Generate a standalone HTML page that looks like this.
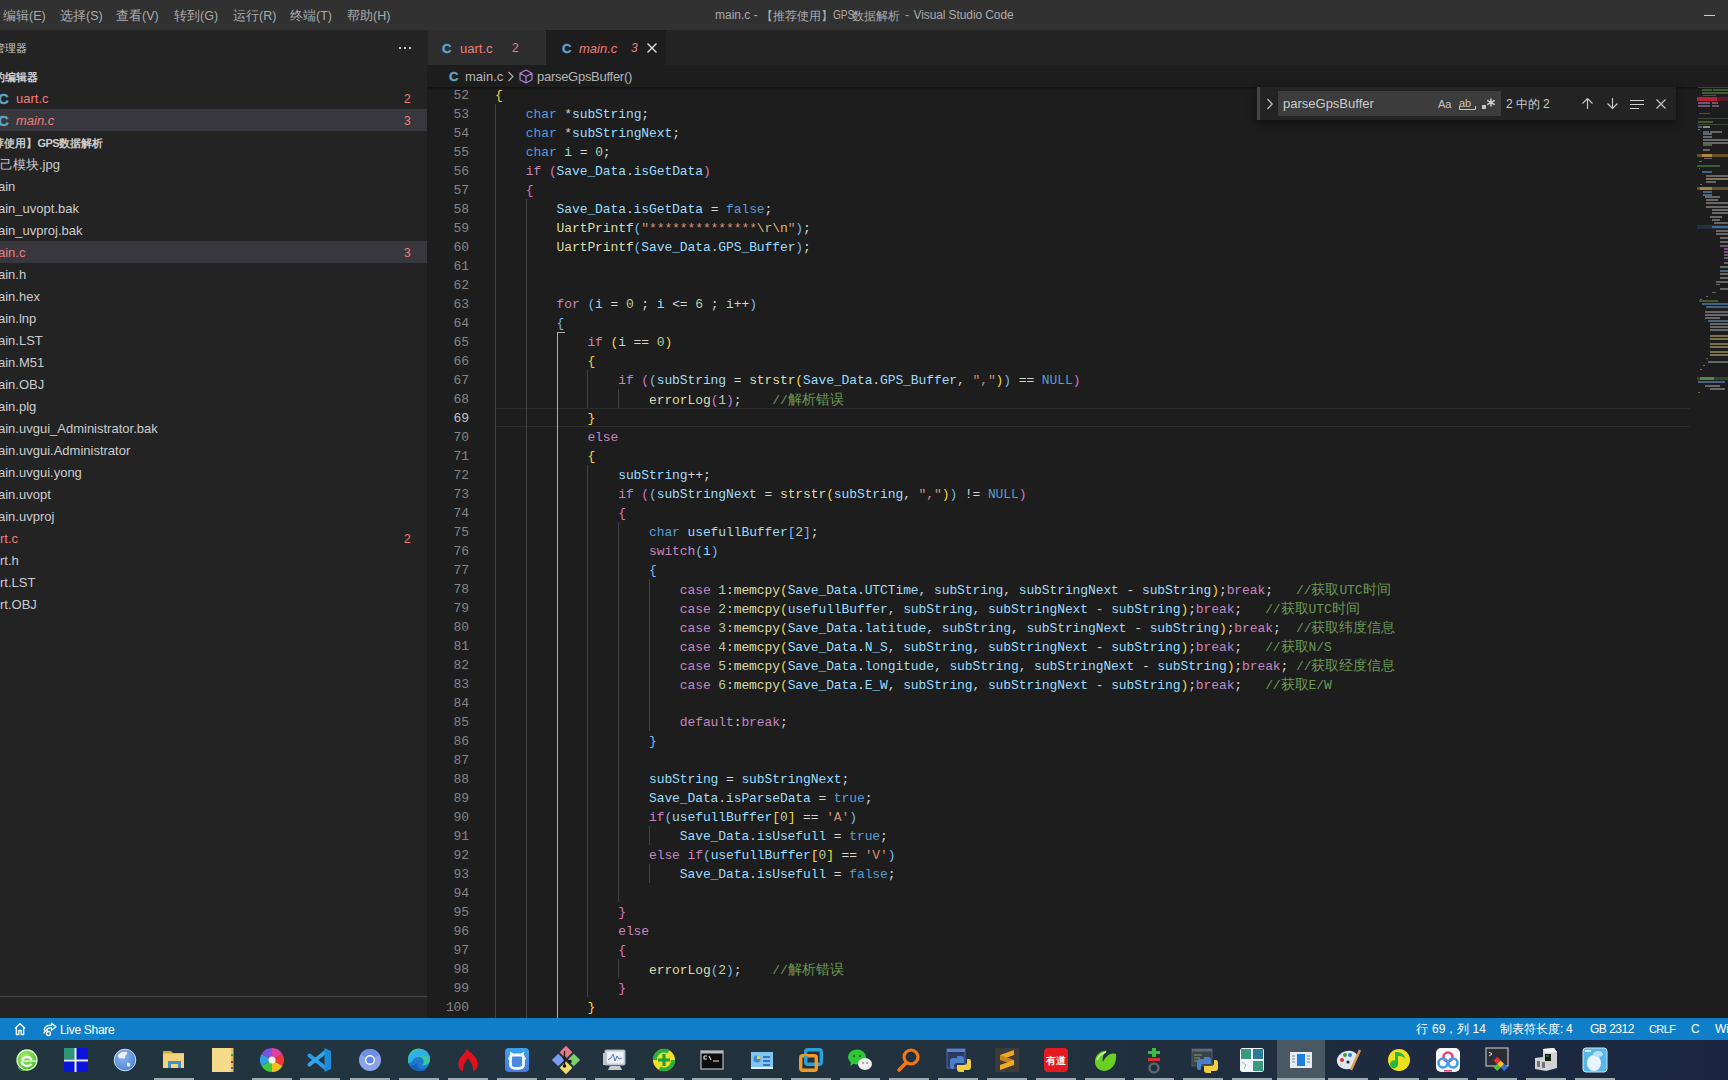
<!DOCTYPE html>
<html><head><meta charset="utf-8">
<style>
*{margin:0;padding:0;box-sizing:border-box}
html,body{width:1728px;height:1080px;overflow:hidden;background:#1d1d1d;font-family:"Liberation Sans",sans-serif;}
.abs{position:absolute}
#title{position:absolute;left:0;top:0;width:1728px;height:30px;background:#313131;color:#ababab;font-size:12.5px}
#title .m{position:absolute;top:8px;white-space:nowrap}
#title .tt{position:absolute;top:8px;left:715px;white-space:nowrap;color:#aaaaaa;font-size:12px}
#sidebar{position:absolute;left:0;top:30px;width:427px;height:988px;background:#232324;overflow:hidden;color:#cccccc;font-size:13px}
#sidebar .row{position:absolute;left:0;height:22px;line-height:24px;white-space:nowrap;width:427px}
#sidebar .badge{position:absolute;left:404px;height:22px;line-height:24px;color:#ee7e7c;font-size:12px}
#editor{position:absolute;left:427px;top:30px;width:1301px;height:988px;background:#1d1d1d;overflow:hidden}
#tabs{position:absolute;left:0;top:0;width:1301px;height:35px;background:#232323}
.tab{position:absolute;top:0;height:35px;font-size:13px;line-height:37px;white-space:nowrap}
.ci{color:#62a4c8;font-weight:bold;-webkit-text-stroke:0.4px #62a4c8}
#crumbs{position:absolute;left:0;top:35px;width:1301px;height:22px;background:#1d1d1d;font-size:13px;color:#b4b4b4;line-height:24px;white-space:nowrap}
#code{position:absolute;left:427px;top:87px;width:1301px;height:931px;overflow:hidden}
#codein{position:absolute;left:-427px;top:0;width:1728px;height:931px}
.ln{position:absolute;height:19px;line-height:19px;font-family:"Liberation Mono",monospace;font-size:13px;letter-spacing:-0.1px;white-space:pre;color:#d4d4d4}
.num{position:absolute;left:419px;width:50px;text-align:right;height:19px;line-height:19px;font-family:"Liberation Mono",monospace;font-size:13px;letter-spacing:-0.1px;color:#858585}
.num.cur{color:#c6c6c6}
.mm{position:absolute;opacity:0.68}
.g{position:absolute;width:1px;background:#404040}
.g.act{background:#a8b0b4}
.cj{font-family:"Liberation Sans",sans-serif;letter-spacing:0;font-size:14px}
#status{position:absolute;left:0;top:1018px;width:1728px;height:22px;background:#107fc9;color:#ffffff;font-size:12px;line-height:22px;white-space:nowrap}
#status .s{position:absolute;top:0}
#taskbar{position:absolute;left:0;top:1040px;width:1728px;height:40px;background:linear-gradient(90deg,#22353f 0%,#21313d 60%,#1b2541 100%)}
.ti{position:absolute;top:0;width:48px;height:40px}
.ind{position:absolute;top:38px;height:2px;background:#a4aeb4}
</style></head><body>

<div id="title">
  <div class="m" style="left:3px">编辑(E)</div>
  <div class="m" style="left:60px">选择(S)</div>
  <div class="m" style="left:116px">查看(V)</div>
  <div class="m" style="left:174px">转到(G)</div>
  <div class="m" style="left:233px">运行(R)</div>
  <div class="m" style="left:290px">终端(T)</div>
  <div class="m" style="left:347px">帮助(H)</div>
  <div class="tt" style="left:715px">main.c -</div><div class="tt" style="left:761px;font-size:12.4px">【推荐使用】</div><div class="tt" style="left:832.5px;transform:scaleX(0.84);transform-origin:0 0">GPS</div><div class="tt" style="left:852px;font-size:12.4px">数据解析</div><div class="tt" style="left:905px">-</div><div class="tt" style="left:913.5px;letter-spacing:-0.1px">Visual Studio Code</div>
  <div class="abs" style="left:1704px;top:15px;width:11px;height:1px;background:#cccccc"></div>
</div>

<div id="sidebar">
  <div class="row" style="top:7px;left:-6px;height:22px;line-height:22px;font-size:11px">管理器</div>
  <div class="abs" style="left:399px;top:17px;width:14px;height:3px;color:#ccc;font-size:14px;line-height:3px">
    <div class="abs" style="left:0;top:0;width:2px;height:2px;background:#ccc"></div>
    <div class="abs" style="left:5px;top:0;width:2px;height:2px;background:#ccc"></div>
    <div class="abs" style="left:10px;top:0;width:2px;height:2px;background:#ccc"></div>
  </div>
  <div class="row" style="top:35px;left:-6px;font-size:11px;font-weight:bold">的编辑器</div>
  <div class="row" style="top:57px;color:#ee7e7c"><span style="position:absolute;left:-2px;font-size:15px;color:#62a4c8;font-weight:bold;-webkit-text-stroke:0.3px #62a4c8">C</span><span style="position:absolute;left:16px">uart.c</span></div>
  <div class="badge" style="top:57px">2</div>
  <div class="row" style="top:79px;background:#37373d;color:#ee7e7c"><span style="position:absolute;left:-2px;font-size:15px;color:#62a4c8;font-weight:bold;-webkit-text-stroke:0.3px #62a4c8">C</span><span style="position:absolute;left:16px;font-style:italic">main.c</span></div>
  <div class="badge" style="top:79px">3</div>
  <div class="row" style="top:101px;left:-7px;font-size:11px;font-weight:bold">荐使用】</div><div class="row" style="top:101px;left:37.5px;font-size:11px;font-weight:bold;letter-spacing:-0.6px">GPS</div><div class="row" style="top:101px;left:59px;font-size:11px;font-weight:bold">数据解析</div>
  <div class="row" style="top:211px;background:#37373d"></div>
  <div class="row" style="top:123px;left:0px;color:#cccccc">己模块</div>
<div class="row" style="top:123px;left:39px;color:#cccccc">.jpg</div>
<div class="row" style="top:145px;left:-2px;color:#cccccc">ain</div>
<div class="row" style="top:167px;left:-2px;color:#cccccc">ain_uvopt.bak</div>
<div class="row" style="top:189px;left:-2px;color:#cccccc">ain_uvproj.bak</div>
<div class="row" style="top:211px;left:-2px;color:#ee7e7c">ain.c</div>
<div class="badge" style="top:211px">3</div>
<div class="row" style="top:233px;left:-2px;color:#cccccc">ain.h</div>
<div class="row" style="top:255px;left:-2px;color:#cccccc">ain.hex</div>
<div class="row" style="top:277px;left:-2px;color:#cccccc">ain.lnp</div>
<div class="row" style="top:299px;left:-2px;color:#cccccc">ain.LST</div>
<div class="row" style="top:321px;left:-2px;color:#cccccc">ain.M51</div>
<div class="row" style="top:343px;left:-2px;color:#cccccc">ain.OBJ</div>
<div class="row" style="top:365px;left:-2px;color:#cccccc">ain.plg</div>
<div class="row" style="top:387px;left:-2px;color:#cccccc">ain.uvgui_Administrator.bak</div>
<div class="row" style="top:409px;left:-2px;color:#cccccc">ain.uvgui.Administrator</div>
<div class="row" style="top:431px;left:-2px;color:#cccccc">ain.uvgui.yong</div>
<div class="row" style="top:453px;left:-2px;color:#cccccc">ain.uvopt</div>
<div class="row" style="top:475px;left:-2px;color:#cccccc">ain.uvproj</div>
<div class="row" style="top:497px;left:0px;color:#ee7e7c">rt.c</div>
<div class="badge" style="top:497px">2</div>
<div class="row" style="top:519px;left:0px;color:#cccccc">rt.h</div>
<div class="row" style="top:541px;left:0px;color:#cccccc">rt.LST</div>
<div class="row" style="top:563px;left:0px;color:#cccccc">rt.OBJ</div>
  <div class="abs" style="left:0;top:966px;width:427px;height:1px;background:#464647"></div>
</div>

<div id="editor">
  <div id="tabs">
    <div class="tab" style="left:1px;width:118px;background:#2d2d2d">
      <span class="abs ci" style="left:14px">C</span>
      <span class="abs" style="left:32px;color:#ee7e7c">uart.c</span>
      <span class="abs" style="left:84px;color:#ee7e7c;font-size:12px">2</span>
    </div>
    <div class="tab" style="left:119px;width:120px;background:#1d1d1d">
      <span class="abs ci" style="left:16px">C</span>
      <span class="abs" style="left:33px;color:#ee7e7c;font-style:italic">main.c</span>
      <span class="abs" style="left:85px;color:#ee7e7c;font-size:12px;font-style:italic">3</span>
      <svg class="abs" style="left:100px;top:12px" width="12" height="12" viewBox="0 0 12 12"><path d="M1.5 1.5L10.5 10.5M10.5 1.5L1.5 10.5" stroke="#e8e8e8" stroke-width="1.3"/></svg>
    </div>
  </div>
  <div id="crumbs">
    <span class="abs ci" style="left:22px">C</span>
    <span class="abs" style="left:38px">main.c</span>
    <svg class="abs" style="left:80px;top:6px" width="8" height="11" viewBox="0 0 8 11"><path d="M1.5 1L6 5.5L1.5 10" fill="none" stroke="#b4b4b4" stroke-width="1.1"/></svg>
    <svg class="abs" style="left:92px;top:4px" width="14" height="15" viewBox="0 0 14 15"><path d="M7 1L13 4.2V10.8L7 14L1 10.8V4.2Z M1 4.2L7 7.5L13 4.2 M7 7.5V14" fill="none" stroke="#b180d7" stroke-width="1.2" stroke-linejoin="round"/></svg>
    <span class="abs" style="left:110px;letter-spacing:-0.28px">parseGpsBuffer()</span>
  </div>
</div>

<div id="code"><div id="codein">
  <div class="abs" style="left:495px;top:321px;width:1195px;height:19px;border-top:1px solid #2b2b2b;border-bottom:1px solid #2b2b2b"></div>
  <div class="g" style="left:495px;top:17px;height:931px"></div>
<div class="g" style="left:526px;top:112px;height:836px"></div>
<div class="g act" style="left:557px;top:245px;height:703px"></div>
<div class="g" style="left:587px;top:283px;height:38px"></div>
<div class="g" style="left:587px;top:378px;height:532px"></div>
<div class="g" style="left:618px;top:302px;height:19px"></div>
<div class="g" style="left:618px;top:435px;height:380px"></div>
<div class="g" style="left:618px;top:872px;height:19px"></div>
<div class="g" style="left:649px;top:492px;height:152px"></div>
<div class="g" style="left:649px;top:739px;height:19px"></div>
<div class="g" style="left:649px;top:777px;height:19px"></div>
<div class="ln" style="top:-1px;left:495.0px"><span style="color:#f5d540">{</span></div>
<div class="num" style="top:-1px">52</div>
<div class="ln" style="top:18px;left:525.8px"><span style="color:#569cd6">char</span> <span style="color:#d4d4d4">*</span><span style="color:#9cdcfe">subString</span><span style="color:#d4d4d4">;</span></div>
<div class="num" style="top:18px">53</div>
<div class="ln" style="top:37px;left:525.8px"><span style="color:#569cd6">char</span> <span style="color:#d4d4d4">*</span><span style="color:#9cdcfe">subStringNext</span><span style="color:#d4d4d4">;</span></div>
<div class="num" style="top:37px">54</div>
<div class="ln" style="top:56px;left:525.8px"><span style="color:#569cd6">char</span> <span style="color:#9cdcfe">i</span> <span style="color:#d4d4d4">=</span> <span style="color:#b5cea8">0</span><span style="color:#d4d4d4">;</span></div>
<div class="num" style="top:56px">55</div>
<div class="ln" style="top:75px;left:525.8px"><span style="color:#c586c0">if</span> <span style="color:#d474d0">(</span><span style="color:#9cdcfe">Save_Data</span><span style="color:#d4d4d4">.</span><span style="color:#9cdcfe">isGetData</span><span style="color:#d474d0">)</span></div>
<div class="num" style="top:75px">56</div>
<div class="ln" style="top:94px;left:525.8px"><span style="color:#d474d0">{</span></div>
<div class="num" style="top:94px">57</div>
<div class="ln" style="top:113px;left:556.6px"><span style="color:#9cdcfe">Save_Data</span><span style="color:#d4d4d4">.</span><span style="color:#9cdcfe">isGetData</span> <span style="color:#d4d4d4">=</span> <span style="color:#569cd6">false</span><span style="color:#d4d4d4">;</span></div>
<div class="num" style="top:113px">58</div>
<div class="ln" style="top:132px;left:556.6px"><span style="color:#dcdcaa">UartPrintf</span><span style="color:#78b8f0">(</span><span style="color:#ce9178">&quot;**************</span><span style="color:#d7ba7d">\r\n</span><span style="color:#ce9178">&quot;</span><span style="color:#78b8f0">)</span><span style="color:#d4d4d4">;</span></div>
<div class="num" style="top:132px">59</div>
<div class="ln" style="top:151px;left:556.6px"><span style="color:#dcdcaa">UartPrintf</span><span style="color:#78b8f0">(</span><span style="color:#9cdcfe">Save_Data</span><span style="color:#d4d4d4">.</span><span style="color:#9cdcfe">GPS_Buffer</span><span style="color:#78b8f0">)</span><span style="color:#d4d4d4">;</span></div>
<div class="num" style="top:151px">60</div>
<div class="ln" style="top:170px;left:495.0px"></div>
<div class="num" style="top:170px">61</div>
<div class="ln" style="top:189px;left:495.0px"></div>
<div class="num" style="top:189px">62</div>
<div class="ln" style="top:208px;left:556.6px"><span style="color:#c586c0">for</span> <span style="color:#78b8f0">(</span><span style="color:#9cdcfe">i</span> <span style="color:#d4d4d4">=</span> <span style="color:#b5cea8">0</span> <span style="color:#d4d4d4">;</span> <span style="color:#9cdcfe">i</span> <span style="color:#d4d4d4">&lt;=</span> <span style="color:#b5cea8">6</span> <span style="color:#d4d4d4">;</span> <span style="color:#9cdcfe">i</span><span style="color:#d4d4d4">++</span><span style="color:#78b8f0">)</span></div>
<div class="num" style="top:208px">63</div>
<div class="ln" style="top:227px;left:556.6px"><span style="color:#78b8f0">{</span></div>
<div class="num" style="top:227px">64</div>
<div class="ln" style="top:246px;left:587.4px"><span style="color:#c586c0">if</span> <span style="color:#f5d540">(</span><span style="color:#9cdcfe">i</span> <span style="color:#d4d4d4">==</span> <span style="color:#b5cea8">0</span><span style="color:#f5d540">)</span></div>
<div class="num" style="top:246px">65</div>
<div class="ln" style="top:265px;left:587.4px"><span style="color:#f5d540">{</span></div>
<div class="num" style="top:265px">66</div>
<div class="ln" style="top:284px;left:618.2px"><span style="color:#c586c0">if</span> <span style="color:#d474d0">(</span><span style="color:#78b8f0">(</span><span style="color:#9cdcfe">subString</span> <span style="color:#d4d4d4">=</span> <span style="color:#dcdcaa">strstr</span><span style="color:#f5d540">(</span><span style="color:#9cdcfe">Save_Data</span><span style="color:#d4d4d4">.</span><span style="color:#9cdcfe">GPS_Buffer</span><span style="color:#d4d4d4">,</span> <span style="color:#ce9178">&quot;,&quot;</span><span style="color:#f5d540">)</span><span style="color:#78b8f0">)</span> <span style="color:#d4d4d4">==</span> <span style="color:#569cd6">NULL</span><span style="color:#d474d0">)</span></div>
<div class="num" style="top:284px">67</div>
<div class="ln" style="top:303px;left:649.0px"><span style="color:#dcdcaa">errorLog</span><span style="color:#d474d0">(</span><span style="color:#b5cea8">1</span><span style="color:#d474d0">)</span><span style="color:#d4d4d4">;</span>    <span style="color:#6a9955">//<span class="cj">解析错误</span></span></div>
<div class="num" style="top:303px">68</div>
<div class="ln" style="top:322px;left:587.4px"><span style="color:#f5d540">}</span></div>
<div class="num cur" style="top:322px">69</div>
<div class="ln" style="top:341px;left:587.4px"><span style="color:#c586c0">else</span></div>
<div class="num" style="top:341px">70</div>
<div class="ln" style="top:360px;left:587.4px"><span style="color:#f5d540">{</span></div>
<div class="num" style="top:360px">71</div>
<div class="ln" style="top:379px;left:618.2px"><span style="color:#9cdcfe">subString</span><span style="color:#d4d4d4">++;</span></div>
<div class="num" style="top:379px">72</div>
<div class="ln" style="top:398px;left:618.2px"><span style="color:#c586c0">if</span> <span style="color:#d474d0">(</span><span style="color:#78b8f0">(</span><span style="color:#9cdcfe">subStringNext</span> <span style="color:#d4d4d4">=</span> <span style="color:#dcdcaa">strstr</span><span style="color:#f5d540">(</span><span style="color:#9cdcfe">subString</span><span style="color:#d4d4d4">,</span> <span style="color:#ce9178">&quot;,&quot;</span><span style="color:#f5d540">)</span><span style="color:#78b8f0">)</span> <span style="color:#d4d4d4">!=</span> <span style="color:#569cd6">NULL</span><span style="color:#d474d0">)</span></div>
<div class="num" style="top:398px">73</div>
<div class="ln" style="top:417px;left:618.2px"><span style="color:#d474d0">{</span></div>
<div class="num" style="top:417px">74</div>
<div class="ln" style="top:436px;left:649.0px"><span style="color:#569cd6">char</span> <span style="color:#9cdcfe">usefullBuffer</span><span style="color:#78b8f0">[</span><span style="color:#b5cea8">2</span><span style="color:#78b8f0">]</span><span style="color:#d4d4d4">;</span></div>
<div class="num" style="top:436px">75</div>
<div class="ln" style="top:455px;left:649.0px"><span style="color:#c586c0">switch</span><span style="color:#78b8f0">(</span><span style="color:#9cdcfe">i</span><span style="color:#78b8f0">)</span></div>
<div class="num" style="top:455px">76</div>
<div class="ln" style="top:474px;left:649.0px"><span style="color:#78b8f0">{</span></div>
<div class="num" style="top:474px">77</div>
<div class="ln" style="top:493px;left:679.8px"><span style="color:#c586c0">case</span> <span style="color:#b5cea8">1</span><span style="color:#d4d4d4">:</span><span style="color:#dcdcaa">memcpy</span><span style="color:#f5d540">(</span><span style="color:#9cdcfe">Save_Data</span><span style="color:#d4d4d4">.</span><span style="color:#9cdcfe">UTCTime</span><span style="color:#d4d4d4">,</span> <span style="color:#9cdcfe">subString</span><span style="color:#d4d4d4">,</span> <span style="color:#9cdcfe">subStringNext</span> <span style="color:#d4d4d4">-</span> <span style="color:#9cdcfe">subString</span><span style="color:#f5d540">)</span><span style="color:#d4d4d4">;</span><span style="color:#c586c0">break</span><span style="color:#d4d4d4">;</span>   <span style="color:#6a9955">//<span class="cj">获取</span>UTC<span class="cj">时间</span></span></div>
<div class="num" style="top:493px">78</div>
<div class="ln" style="top:512px;left:679.8px"><span style="color:#c586c0">case</span> <span style="color:#b5cea8">2</span><span style="color:#d4d4d4">:</span><span style="color:#dcdcaa">memcpy</span><span style="color:#f5d540">(</span><span style="color:#9cdcfe">usefullBuffer</span><span style="color:#d4d4d4">,</span> <span style="color:#9cdcfe">subString</span><span style="color:#d4d4d4">,</span> <span style="color:#9cdcfe">subStringNext</span> <span style="color:#d4d4d4">-</span> <span style="color:#9cdcfe">subString</span><span style="color:#f5d540">)</span><span style="color:#d4d4d4">;</span><span style="color:#c586c0">break</span><span style="color:#d4d4d4">;</span>   <span style="color:#6a9955">//<span class="cj">获取</span>UTC<span class="cj">时间</span></span></div>
<div class="num" style="top:512px">79</div>
<div class="ln" style="top:531px;left:679.8px"><span style="color:#c586c0">case</span> <span style="color:#b5cea8">3</span><span style="color:#d4d4d4">:</span><span style="color:#dcdcaa">memcpy</span><span style="color:#f5d540">(</span><span style="color:#9cdcfe">Save_Data</span><span style="color:#d4d4d4">.</span><span style="color:#9cdcfe">latitude</span><span style="color:#d4d4d4">,</span> <span style="color:#9cdcfe">subString</span><span style="color:#d4d4d4">,</span> <span style="color:#9cdcfe">subStringNext</span> <span style="color:#d4d4d4">-</span> <span style="color:#9cdcfe">subString</span><span style="color:#f5d540">)</span><span style="color:#d4d4d4">;</span><span style="color:#c586c0">break</span><span style="color:#d4d4d4">;</span>  <span style="color:#6a9955">//<span class="cj">获取纬度信息</span></span></div>
<div class="num" style="top:531px">80</div>
<div class="ln" style="top:550px;left:679.8px"><span style="color:#c586c0">case</span> <span style="color:#b5cea8">4</span><span style="color:#d4d4d4">:</span><span style="color:#dcdcaa">memcpy</span><span style="color:#f5d540">(</span><span style="color:#9cdcfe">Save_Data</span><span style="color:#d4d4d4">.</span><span style="color:#9cdcfe">N_S</span><span style="color:#d4d4d4">,</span> <span style="color:#9cdcfe">subString</span><span style="color:#d4d4d4">,</span> <span style="color:#9cdcfe">subStringNext</span> <span style="color:#d4d4d4">-</span> <span style="color:#9cdcfe">subString</span><span style="color:#f5d540">)</span><span style="color:#d4d4d4">;</span><span style="color:#c586c0">break</span><span style="color:#d4d4d4">;</span>   <span style="color:#6a9955">//<span class="cj">获取</span>N/S</span></div>
<div class="num" style="top:550px">81</div>
<div class="ln" style="top:569px;left:679.8px"><span style="color:#c586c0">case</span> <span style="color:#b5cea8">5</span><span style="color:#d4d4d4">:</span><span style="color:#dcdcaa">memcpy</span><span style="color:#f5d540">(</span><span style="color:#9cdcfe">Save_Data</span><span style="color:#d4d4d4">.</span><span style="color:#9cdcfe">longitude</span><span style="color:#d4d4d4">,</span> <span style="color:#9cdcfe">subString</span><span style="color:#d4d4d4">,</span> <span style="color:#9cdcfe">subStringNext</span> <span style="color:#d4d4d4">-</span> <span style="color:#9cdcfe">subString</span><span style="color:#f5d540">)</span><span style="color:#d4d4d4">;</span><span style="color:#c586c0">break</span><span style="color:#d4d4d4">;</span> <span style="color:#6a9955">//<span class="cj">获取经度信息</span></span></div>
<div class="num" style="top:569px">82</div>
<div class="ln" style="top:588px;left:679.8px"><span style="color:#c586c0">case</span> <span style="color:#b5cea8">6</span><span style="color:#d4d4d4">:</span><span style="color:#dcdcaa">memcpy</span><span style="color:#f5d540">(</span><span style="color:#9cdcfe">Save_Data</span><span style="color:#d4d4d4">.</span><span style="color:#9cdcfe">E_W</span><span style="color:#d4d4d4">,</span> <span style="color:#9cdcfe">subString</span><span style="color:#d4d4d4">,</span> <span style="color:#9cdcfe">subStringNext</span> <span style="color:#d4d4d4">-</span> <span style="color:#9cdcfe">subString</span><span style="color:#f5d540">)</span><span style="color:#d4d4d4">;</span><span style="color:#c586c0">break</span><span style="color:#d4d4d4">;</span>   <span style="color:#6a9955">//<span class="cj">获取</span>E/W</span></div>
<div class="num" style="top:588px">83</div>
<div class="ln" style="top:607px;left:495.0px"></div>
<div class="num" style="top:607px">84</div>
<div class="ln" style="top:626px;left:679.8px"><span style="color:#c586c0">default</span><span style="color:#d4d4d4">:</span><span style="color:#c586c0">break</span><span style="color:#d4d4d4">;</span></div>
<div class="num" style="top:626px">85</div>
<div class="ln" style="top:645px;left:649.0px"><span style="color:#78b8f0">}</span></div>
<div class="num" style="top:645px">86</div>
<div class="ln" style="top:664px;left:495.0px"></div>
<div class="num" style="top:664px">87</div>
<div class="ln" style="top:683px;left:649.0px"><span style="color:#9cdcfe">subString</span> <span style="color:#d4d4d4">=</span> <span style="color:#9cdcfe">subStringNext</span><span style="color:#d4d4d4">;</span></div>
<div class="num" style="top:683px">88</div>
<div class="ln" style="top:702px;left:649.0px"><span style="color:#9cdcfe">Save_Data</span><span style="color:#d4d4d4">.</span><span style="color:#9cdcfe">isParseData</span> <span style="color:#d4d4d4">=</span> <span style="color:#569cd6">true</span><span style="color:#d4d4d4">;</span></div>
<div class="num" style="top:702px">89</div>
<div class="ln" style="top:721px;left:649.0px"><span style="color:#c586c0">if</span><span style="color:#78b8f0">(</span><span style="color:#9cdcfe">usefullBuffer</span><span style="color:#f5d540">[</span><span style="color:#b5cea8">0</span><span style="color:#f5d540">]</span> <span style="color:#d4d4d4">==</span> <span style="color:#ce9178">&#x27;A&#x27;</span><span style="color:#78b8f0">)</span></div>
<div class="num" style="top:721px">90</div>
<div class="ln" style="top:740px;left:679.8px"><span style="color:#9cdcfe">Save_Data</span><span style="color:#d4d4d4">.</span><span style="color:#9cdcfe">isUsefull</span> <span style="color:#d4d4d4">=</span> <span style="color:#569cd6">true</span><span style="color:#d4d4d4">;</span></div>
<div class="num" style="top:740px">91</div>
<div class="ln" style="top:759px;left:649.0px"><span style="color:#c586c0">else</span> <span style="color:#c586c0">if</span><span style="color:#78b8f0">(</span><span style="color:#9cdcfe">usefullBuffer</span><span style="color:#f5d540">[</span><span style="color:#b5cea8">0</span><span style="color:#f5d540">]</span> <span style="color:#d4d4d4">==</span> <span style="color:#ce9178">&#x27;V&#x27;</span><span style="color:#78b8f0">)</span></div>
<div class="num" style="top:759px">92</div>
<div class="ln" style="top:778px;left:679.8px"><span style="color:#9cdcfe">Save_Data</span><span style="color:#d4d4d4">.</span><span style="color:#9cdcfe">isUsefull</span> <span style="color:#d4d4d4">=</span> <span style="color:#569cd6">false</span><span style="color:#d4d4d4">;</span></div>
<div class="num" style="top:778px">93</div>
<div class="ln" style="top:797px;left:495.0px"></div>
<div class="num" style="top:797px">94</div>
<div class="ln" style="top:816px;left:618.2px"><span style="color:#d474d0">}</span></div>
<div class="num" style="top:816px">95</div>
<div class="ln" style="top:835px;left:618.2px"><span style="color:#c586c0">else</span></div>
<div class="num" style="top:835px">96</div>
<div class="ln" style="top:854px;left:618.2px"><span style="color:#d474d0">{</span></div>
<div class="num" style="top:854px">97</div>
<div class="ln" style="top:873px;left:649.0px"><span style="color:#dcdcaa">errorLog</span><span style="color:#78b8f0">(</span><span style="color:#b5cea8">2</span><span style="color:#78b8f0">)</span><span style="color:#d4d4d4">;</span>    <span style="color:#6a9955">//<span class="cj">解析错误</span></span></div>
<div class="num" style="top:873px">98</div>
<div class="ln" style="top:892px;left:618.2px"><span style="color:#d474d0">}</span></div>
<div class="num" style="top:892px">99</div>
<div class="ln" style="top:911px;left:587.4px"><span style="color:#f5d540">}</span></div>
<div class="num" style="top:911px">100</div>
<div class="abs" style="left:557px;top:245px;width:8px;height:1px;background:#a8b0b4"></div>
</div></div>
<div class="abs" style="left:427px;top:87px;width:1301px;height:3px;background:linear-gradient(rgba(0,0,0,0.4),rgba(0,0,0,0))"></div>


<div class="mm" style="left:1698px;top:87px;width:30px;height:1px;background:#505c48"></div>
<div class="mm" style="left:1702px;top:89px;width:10px;height:2px;background:#4e7a40"></div>
<div class="mm" style="left:1713px;top:89px;width:15px;height:2px;background:#4e7a40"></div>
<div class="mm" style="left:1702px;top:92px;width:26px;height:2px;background:#4e7a40"></div>
<div class="mm" style="left:1703px;top:95px;width:13px;height:1px;background:#4e7a40"></div>
<div class="mm" style="left:1697px;top:97px;width:20px;height:4px;background:#ff2040"></div>
<div class="mm" style="left:1717px;top:97px;width:11px;height:4px;background:#7a1828"></div>
<div class="mm" style="left:1698px;top:102px;width:12px;height:2px;background:#9a70a0"></div>
<div class="mm" style="left:1712px;top:102px;width:6px;height:2px;background:#a07080"></div>
<div class="mm" style="left:1698px;top:105px;width:12px;height:2px;background:#9a70a0"></div>
<div class="mm" style="left:1712px;top:105px;width:7px;height:2px;background:#a07080"></div>
<div class="mm" style="left:1699px;top:113px;width:11px;height:1px;background:#4e7a40"></div>
<div class="mm" style="left:1698px;top:118px;width:30px;height:1px;background:#505c48"></div>
<div class="mm" style="left:1698px;top:121px;width:15px;height:2px;background:#4e7a40"></div>
<div class="mm" style="left:1698px;top:124px;width:30px;height:1px;background:#505c48"></div>
<div class="mm" style="left:1698px;top:126px;width:4px;height:2px;background:#5a86b0"></div>
<div class="mm" style="left:1703px;top:126px;width:7px;height:2px;background:#c0c0a0"></div>
<div class="mm" style="left:1698px;top:129px;width:2px;height:1px;background:#a09a70"></div>
<div class="mm" style="left:1703px;top:131px;width:6px;height:2px;background:#5a86b0"></div>
<div class="mm" style="left:1710px;top:131px;width:12px;height:2px;background:#8a8a8a"></div>
<div class="mm" style="left:1703px;top:133px;width:9px;height:2px;background:#8a8a8a"></div>
<div class="mm" style="left:1703px;top:136px;width:9px;height:2px;background:#8a8a8a"></div>
<div class="mm" style="left:1703px;top:139px;width:25px;height:2px;background:#8a8a8a"></div>
<div class="mm" style="left:1703px;top:142px;width:25px;height:2px;background:#8a8a8a"></div>
<div class="mm" style="left:1703px;top:144px;width:9px;height:2px;background:#708060"></div>
<div class="mm" style="left:1703px;top:149px;width:7px;height:2px;background:#8a8a8a"></div>
<div class="mm" style="left:1697px;top:154px;width:31px;height:3px;background:#8a6a30"></div>
<div class="mm" style="left:1702px;top:154px;width:10px;height:3px;background:#d0a040"></div>
<div class="mm" style="left:1704px;top:158px;width:8px;height:1px;background:#8a8a8a"></div>
<div class="mm" style="left:1699px;top:161px;width:3px;height:1px;background:#8a8a8a"></div>
<div class="mm" style="left:1697px;top:165px;width:23px;height:2px;background:#4e7a40"></div>
<div class="mm" style="left:1699px;top:168px;width:1px;height:1px;background:#8a8a8a"></div>
<div class="mm" style="left:1702px;top:171px;width:10px;height:2px;background:#5a86b0"></div>
<div class="mm" style="left:1706px;top:175px;width:22px;height:2px;background:#8a8a8a"></div>
<div class="mm" style="left:1706px;top:178px;width:22px;height:2px;background:#b0a070"></div>
<div class="mm" style="left:1706px;top:181px;width:10px;height:2px;background:#8a8a8a"></div>
<div class="mm" style="left:1700px;top:184px;width:2px;height:1px;background:#8a8a8a"></div>
<div class="mm" style="left:1697px;top:187px;width:31px;height:3px;background:#8a6a30"></div>
<div class="mm" style="left:1700px;top:187px;width:12px;height:3px;background:#c09a50"></div>
<div class="mm" style="left:1703px;top:191px;width:9px;height:2px;background:#6a8ab0"></div>
<div class="mm" style="left:1703px;top:194px;width:9px;height:2px;background:#6a8ab0"></div>
<div class="mm" style="left:1705px;top:196px;width:15px;height:2px;background:#8a8a8a"></div>
<div class="mm" style="left:1706px;top:199px;width:12px;height:2px;background:#8a8a8a"></div>
<div class="mm" style="left:1706px;top:202px;width:22px;height:2px;background:#8a8a8a"></div>
<div class="mm" style="left:1706px;top:206px;width:22px;height:2px;background:#8a8a8a"></div>
<div class="mm" style="left:1712px;top:209px;width:16px;height:2px;background:#909090"></div>
<div class="mm" style="left:1712px;top:212px;width:16px;height:2px;background:#909090"></div>
<div class="mm" style="left:1710px;top:216px;width:12px;height:2px;background:#8a8a8a"></div>
<div class="mm" style="left:1712px;top:219px;width:8px;height:2px;background:#8a8a8a"></div>
<div class="mm" style="left:1714px;top:222px;width:14px;height:2px;background:#8a8a8a"></div>
<div class="mm" style="left:1697px;top:225px;width:31px;height:4px;background:#2a3a50"></div>
<div class="mm" style="left:1712px;top:226px;width:16px;height:2px;background:#5a86b0"></div>
<div class="mm" style="left:1716px;top:230px;width:12px;height:2px;background:#8a8a8a"></div>
<div class="mm" style="left:1716px;top:233px;width:12px;height:2px;background:#8a8a8a"></div>
<div class="mm" style="left:1720px;top:237px;width:8px;height:2px;background:#8a8a8a"></div>
<div class="mm" style="left:1720px;top:241px;width:8px;height:2px;background:#8a8a8a"></div>
<div class="mm" style="left:1720px;top:245px;width:8px;height:2px;background:#9a70a0"></div>
<div class="mm" style="left:1724px;top:248px;width:4px;height:2px;background:#9a70a0"></div>
<div class="mm" style="left:1724px;top:251px;width:4px;height:2px;background:#9a70a0"></div>
<div class="mm" style="left:1724px;top:254px;width:4px;height:2px;background:#9a70a0"></div>
<div class="mm" style="left:1724px;top:257px;width:4px;height:2px;background:#9a70a0"></div>
<div class="mm" style="left:1724px;top:262px;width:4px;height:2px;background:#8a8a8a"></div>
<div class="mm" style="left:1720px;top:266px;width:8px;height:2px;background:#8a8a8a"></div>
<div class="mm" style="left:1720px;top:270px;width:8px;height:2px;background:#5a86b0"></div>
<div class="mm" style="left:1720px;top:273px;width:8px;height:2px;background:#8a8a8a"></div>
<div class="mm" style="left:1720px;top:277px;width:8px;height:2px;background:#8a8a8a"></div>
<div class="mm" style="left:1716px;top:281px;width:12px;height:2px;background:#8a8a8a"></div>
<div class="mm" style="left:1716px;top:284px;width:4px;height:1px;background:#8a8a8a"></div>
<div class="mm" style="left:1720px;top:288px;width:8px;height:2px;background:#8a8a8a"></div>
<div class="mm" style="left:1712px;top:292px;width:4px;height:1px;background:#8a8a8a"></div>
<div class="mm" style="left:1706px;top:296px;width:2px;height:1px;background:#8a8a8a"></div>
<div class="mm" style="left:1700px;top:299px;width:2px;height:1px;background:#8a8a8a"></div>
<div class="mm" style="left:1699px;top:300px;width:19px;height:2px;background:#4e7a40"></div>
<div class="mm" style="left:1702px;top:303px;width:26px;height:2px;background:#5a86b0"></div>
<div class="mm" style="left:1706px;top:306px;width:22px;height:2px;background:#5a86b0"></div>
<div class="mm" style="left:1705px;top:311px;width:23px;height:2px;background:#8a8a8a"></div>
<div class="mm" style="left:1705px;top:314px;width:23px;height:2px;background:#8a8a8a"></div>
<div class="mm" style="left:1705px;top:317px;width:15px;height:2px;background:#8a8a8a"></div>
<div class="mm" style="left:1708px;top:320px;width:20px;height:2px;background:#5a86b0"></div>
<div class="mm" style="left:1710px;top:323px;width:18px;height:2px;background:#8a8a8a"></div>
<div class="mm" style="left:1710px;top:326px;width:18px;height:2px;background:#8a8a8a"></div>
<div class="mm" style="left:1710px;top:329px;width:18px;height:2px;background:#8a8a8a"></div>
<div class="mm" style="left:1710px;top:335px;width:18px;height:2px;background:#a09a70"></div>
<div class="mm" style="left:1710px;top:338px;width:18px;height:2px;background:#a09a70"></div>
<div class="mm" style="left:1710px;top:343px;width:18px;height:2px;background:#a09a70"></div>
<div class="mm" style="left:1710px;top:346px;width:18px;height:2px;background:#a09a70"></div>
<div class="mm" style="left:1710px;top:351px;width:18px;height:2px;background:#a09a70"></div>
<div class="mm" style="left:1710px;top:354px;width:18px;height:2px;background:#a09a70"></div>
<div class="mm" style="left:1706px;top:358px;width:2px;height:1px;background:#8a8a8a"></div>
<div class="mm" style="left:1708px;top:361px;width:20px;height:2px;background:#8a8a8a"></div>
<div class="mm" style="left:1703px;top:365px;width:2px;height:1px;background:#8a8a8a"></div>
<div class="mm" style="left:1700px;top:369px;width:2px;height:1px;background:#8a8a8a"></div>
<div class="mm" style="left:1697px;top:377px;width:31px;height:3px;background:#3a5a30"></div>
<div class="mm" style="left:1700px;top:377px;width:14px;height:3px;background:#70a050"></div>
<div class="mm" style="left:1698px;top:381px;width:27px;height:2px;background:#5a86b0"></div>
<div class="mm" style="left:1705px;top:385px;width:15px;height:2px;background:#8a8a8a"></div>
<div class="mm" style="left:1710px;top:388px;width:15px;height:2px;background:#8a8a8a"></div>
<div class="mm" style="left:1698px;top:392px;width:2px;height:1px;background:#c08040"></div>
<div id="find" style="position:absolute;left:1257px;top:87px;width:419px;height:33px;background:#232323;box-shadow:0 2px 8px 1px rgba(0,0,0,0.45);">
  <div class="abs" style="left:0;top:0;width:3px;height:33px;background:#454545"></div>
  <svg class="abs" style="left:9px;top:11px" width="8" height="12" viewBox="0 0 8 12"><path d="M1.5 1L6.2 6L1.5 11" fill="none" stroke="#c5c5c5" stroke-width="1.2"/></svg>
  <div class="abs" style="left:21px;top:4px;width:223px;height:25px;background:#3c3c3c"></div>
  <div class="abs" style="left:26px;top:4px;height:25px;line-height:25px;font-size:13px;color:#cccccc;white-space:nowrap">parseGpsBuffer</div>
  <div class="abs" style="left:181px;top:11px;font-size:11px;line-height:12px;color:#c5c5c5">Aa</div>
  <div class="abs" style="left:202px;top:10px;font-size:11px;line-height:12px;color:#c5c5c5">ab</div>
  <svg class="abs" style="left:201px;top:18px" width="19" height="6" viewBox="0 0 19 6"><path d="M1.5 1V4.5H17.5V1" fill="none" stroke="#c5c5c5" stroke-width="1"/></svg>
  <div class="abs" style="left:225px;top:18px;width:4px;height:4px;background:#c5c5c5"></div>
  <svg class="abs" style="left:229px;top:11px" width="10" height="9" viewBox="0 0 10 9"><path d="M5 0.5V8.5M1.2 2.3L8.8 6.7M8.8 2.3L1.2 6.7" stroke="#d0d0d0" stroke-width="1.5"/></svg>
  <div class="abs" style="left:249px;top:4px;height:25px;line-height:26px;font-size:12px;color:#cccccc;white-space:nowrap">2</div><div class="abs" style="left:259px;top:4px;height:25px;line-height:26px;font-size:12px;color:#cccccc;white-space:nowrap">中的</div><div class="abs" style="left:286px;top:4px;height:25px;line-height:26px;font-size:12px;color:#cccccc;white-space:nowrap">2</div>
  <svg class="abs" style="left:324px;top:10px" width="13" height="13" viewBox="0 0 13 13"><path d="M6.5 12V1.5M1.5 6.5L6.5 1.5L11.5 6.5" fill="none" stroke="#c5c5c5" stroke-width="1.2"/></svg>
  <svg class="abs" style="left:349px;top:10px" width="13" height="13" viewBox="0 0 13 13"><path d="M6.5 1V11.5M1.5 6.5L6.5 11.5L11.5 6.5" fill="none" stroke="#c5c5c5" stroke-width="1.2"/></svg>
  <svg class="abs" style="left:373px;top:12px" width="16" height="11" viewBox="0 0 16 11"><path d="M0 1.5H14M0 5.5H14M0 9.5H9" fill="none" stroke="#d0d0d0" stroke-width="1"/></svg>
  <svg class="abs" style="left:398px;top:11px" width="12" height="12" viewBox="0 0 12 12"><path d="M1.5 1.5L10.5 10.5M10.5 1.5L1.5 10.5" fill="none" stroke="#c5c5c5" stroke-width="1.2"/></svg>
</div>

<div id="status">
  <svg class="abs" style="left:13px;top:4px" width="14" height="14" viewBox="0 0 14 14"><path d="M2 6.5L7 1.8L12 6.5M3.3 5.5V12.5H5.8V8.5H8.2V12.5H10.7V5.5" fill="none" stroke="#ffffff" stroke-width="1.3" stroke-linejoin="round"/></svg>
  <svg class="abs" style="left:42px;top:3px" width="16" height="16" viewBox="0 0 16 16"><path d="M2 9.5C2.5 6 5.5 4.2 9.5 4.5V2.2L14 5.8L9.5 9.3V7C6.8 6.8 4.5 7.6 3.5 10" fill="none" stroke="#ffffff" stroke-width="1.3" stroke-linejoin="round"/><path d="M1.8 12.5C2.5 10 4 9 6 9" fill="none" stroke="#ffffff" stroke-width="1.3"/><circle cx="6.5" cy="12.5" r="2" fill="none" stroke="#ffffff" stroke-width="1.3"/></svg>
  <span class="s" style="left:60px;top:1px;letter-spacing:-0.3px">Live Share</span>
  <span class="s" style="left:1416px">行</span><span class="s" style="left:1432px">69</span><span class="s" style="left:1444.7px">，</span><span class="s" style="left:1456.7px">列</span><span class="s" style="left:1472.5px">14</span>
  <span class="s" style="left:1500px">制表符长度</span><span class="s" style="left:1560px">:</span><span class="s" style="left:1566px">4</span>
  <span class="s" style="left:1590px;letter-spacing:-0.5px">GB 2312</span>
  <span class="s" style="left:1649px;font-size:11px;letter-spacing:-0.6px">CRLF</span>
  <span class="s" style="left:1691px">C</span>
  <span class="s" style="left:1715px">Wi</span>
</div>

<div id="taskbar">
<svg class="abs" style="left:0;top:0" width="1728" height="40" viewBox="0 0 1728 40">
<rect x="1277" y="0" width="48" height="40" fill="#4a5863"/>
<g transform="translate(27,20)"><defs><radialGradient id="gie" cx="0.4" cy="0.35" r="0.7"><stop offset="0" stop-color="#a8f070"/><stop offset="1" stop-color="#48b828"/></radialGradient></defs>
<circle r="10" fill="url(#gie)" stroke="#d8ffc8" stroke-width="1.3"/>
<path d="M-5.5 0.5A5.5 4.8 0 0 1 5.5 0.5Z" fill="#f4fff0"/>
<path d="M-3 0.5A3 2.2 0 0 1 3 0.5Z" fill="#70d040"/>
<rect x="-5.5" y="0.5" width="15" height="1.2" fill="#e8ffe0"/>
<path d="M-5.5 1.7A5.5 4.5 0 0 0 4.5 4" stroke="#f4fff0" stroke-width="2.2" fill="none"/>
<path d="M-8 7C-9 10 -5 11 -1 10" stroke="#60c840" stroke-width="1" fill="none"/></g>
<g transform="translate(76,20)"><rect x="-12" y="-12" width="24" height="24" fill="#0a14dc"/>
<rect x="-12" y="-12" width="11" height="11" fill="#2f9478"/>
<rect x="-1.5" y="-12" width="2" height="24" fill="#f0f0f0"/>
<rect x="-12" y="-0.5" width="24" height="2" fill="#f0f0f0"/></g>
<g transform="translate(125,20)"><defs><radialGradient id="ggl" cx="0.4" cy="0.35" r="0.75"><stop offset="0" stop-color="#8cb8f0"/><stop offset="1" stop-color="#4a7ed0"/></radialGradient></defs>
<circle r="10.8" fill="url(#ggl)" stroke="#c8dcf8" stroke-width="1"/>
<path d="M-7 -5C-5 -8 -1 -9 2 -8C3 -6 1 -5 0 -4C1 -2 -1 -1 -3 -2C-5 -1 -7 -2 -7 -5Z" fill="#e8f0fc"/>
<path d="M2 3C4 2 6 3 5 6C4 7 2 7 2 5Z" fill="#e0ecfa"/></g>
<g transform="translate(174,20)"><path d="M-11 -9H-3L-1 -7H10V8H-11Z" fill="#d8a838"/>
<rect x="-11" y="-6.5" width="21" height="14.5" fill="#f6d27a"/>
<path d="M-6 8V1H7V8H4V4H-3V8Z" fill="#3e90d0"/></g>
<rect x="154.0" y="38" width="40" height="2" fill="#9ea9b0"/>
<g transform="translate(223,20)"><rect x="-11" y="-12" width="21" height="24" fill="#f6dc8a"/>
<rect x="8" y="-12" width="2.5" height="24" fill="#e2c060"/>
<rect x="8" y="-6" width="2" height="2" fill="#40a060"/><rect x="8" y="1" width="2" height="2" fill="#c03030"/><rect x="8" y="7" width="2" height="2" fill="#3070c0"/></g>
<g transform="translate(272,20)"><path d="M0 0L0 -12A12 12 0 0 1 10.4 -6Z" fill="#e040a0"/>
<path d="M0 0L10.4 -6A12 12 0 0 1 10.4 6Z" fill="#f03838"/>
<path d="M0 0L10.4 6A12 12 0 0 1 0 12Z" fill="#f0c020"/>
<path d="M0 0L0 12A12 12 0 0 1 -10.4 6Z" fill="#40c840"/>
<path d="M0 0L-10.4 6A12 12 0 0 1 -10.4 -6Z" fill="#30a0e0"/>
<path d="M0 0L-10.4 -6A12 12 0 0 1 0 -12Z" fill="#8050e0"/>
<circle r="3.5" fill="#ffffff" opacity="0.9"/></g>
<rect x="252.0" y="38" width="40" height="2" fill="#9ea9b0"/>
<g transform="translate(320,20)"><path d="M-10.5 -4.5L6 8.5" stroke="#2b9de4" stroke-width="4" stroke-linecap="round"/>
<path d="M-10.5 4.5L6 -8.5" stroke="#2fa6ec" stroke-width="4" stroke-linecap="round"/>
<path d="M4.5 -12L11 -9V9L4.5 12Z" fill="#1f8ad6"/></g>
<rect x="300.0" y="38" width="40" height="2" fill="#9ea9b0"/>
<g transform="translate(370,20)"><circle r="11" fill="#8aa4ec"/>
<path d="M0 0L-9.5 -5.5A11 11 0 0 1 9.5 -5.5Z" fill="#6d8de6"/>
<circle r="5" fill="#ffffff"/><circle r="3.6" fill="#5a84ea"/></g>
<rect x="350.0" y="38" width="40" height="2" fill="#9ea9b0"/>
<g transform="translate(419,20)"><circle r="11" fill="#1e78d0"/>
<path d="M-11 0A11 11 0 0 1 11 -1C11 4 7 6 3 5C6 3 5 -3 0 -3C-5 -3 -9 1 -11 4Z" fill="#38c8a0"/>
<path d="M-11 1C-10 -6 -3 -11 4 -10C8 -9 11 -5 11 -1C7 -6 -4 -6 -8 3Z" fill="#30b0e8"/>
<path d="M-2 4C-2 8 3 11 8 9C4 12 -4 12 -9 6Z" fill="#1560b8"/></g>
<rect x="399.0" y="38" width="40" height="2" fill="#9ea9b0"/>
<g transform="translate(468,20)"><path d="M-1 -11C2 -7 9 -4 9.5 3C10 8 7 11 5 11C5.5 7 3.5 2 0 -2C-3.5 2 -5.5 7 -5 11C-7 11 -10 8 -9.5 3C-9 -3 -3 -6 -1 -11Z" fill="#e4101c"/></g>
<rect x="448.0" y="38" width="40" height="2" fill="#9ea9b0"/>
<g transform="translate(517,20)"><defs><linearGradient id="gcow" x1="0" y1="0" x2="0" y2="1"><stop offset="0" stop-color="#38a2ea"/><stop offset="1" stop-color="#4a78e0"/></linearGradient></defs>
<rect x="-12" y="-12" width="24" height="24" rx="4" fill="url(#gcow)"/>
<path d="M-4.5 -5H4.5Q6.5 -5 6.5 -2V5Q6.5 8.5 0 8.5Q-6.5 8.5 -6.5 5V-2Q-6.5 -5 -4.5 -5Z" fill="#4a88e4" stroke="#f4fbff" stroke-width="2.8"/>
<path d="M-6 -5L-7 -8L-4 -6Z M6 -5L7 -8L4 -6Z" fill="#f4fbff" stroke="#f4fbff" stroke-width="0.8"/>
<path d="M-9 -1.5H-6.5M9 -1.5H6.5" stroke="#f4fbff" stroke-width="1.6"/></g>
<rect x="497.0" y="38" width="40" height="2" fill="#9ea9b0"/>
<g transform="translate(566,20)"><g transform="rotate(45)"><rect x="-10" y="-10" width="9" height="9" fill="#e87a88"/><rect x="1" y="-10" width="9" height="9" fill="#7cd06a"/><rect x="-10" y="1" width="9" height="9" fill="#7c9cf0"/><rect x="1" y="1" width="9" height="9" fill="#f2dc70"/></g>
<path d="M-1.5 -9V7" stroke="#1a1a1a" stroke-width="1.4"/><path d="M-1.5 -2L4 1.5" stroke="#1a1a1a" stroke-width="1.4"/>
<circle cx="-1.5" cy="-2" r="1.6" fill="#1a1a1a"/><circle cx="4" cy="1.5" r="1.8" fill="#1a1a1a"/><circle cx="-1.5" cy="6" r="1.8" fill="#1a1a1a"/></g>
<rect x="546.0" y="38" width="40" height="2" fill="#9ea9b0"/>
<g transform="translate(615,20)"><rect x="-10" y="-10" width="20" height="15" rx="1" fill="#d8dde2" stroke="#a8aeb4"/>
<rect x="-8" y="-8" width="16" height="11" fill="#eef2f6"/>
<path d="M-7 0L-4 -2L-2 -6L0 1L2 -4L4 -1L7 -2" stroke="#4a7ad0" stroke-width="1" fill="none"/>
<path d="M-5 6H5L7 10H-7Z" fill="#c8ccd0"/>
<rect x="-12" y="-7" width="4" height="12" fill="#c0c4c8"/></g>
<rect x="595.0" y="38" width="40" height="2" fill="#9ea9b0"/>
<g transform="translate(664,20)"><circle r="11" fill="#f0e028"/>
<path d="M-11 0A11 11 0 0 1 5 -10L3.5 -6.5A7 7 0 0 0 -7 0Z M11 0A11 11 0 0 1 -5 10L-3.5 6.5A7 7 0 0 0 7 0Z" fill="#28b040"/>
<path d="M-1.6 -6H1.6V-1.6H6V1.6H1.6V6H-1.6V1.6H-6V-1.6H-1.6Z" fill="#1aa038"/></g>
<rect x="644.0" y="38" width="40" height="2" fill="#9ea9b0"/>
<g transform="translate(712,20)"><rect x="-11" y="-9" width="22" height="18" fill="#0c0c0c" stroke="#b8bcc0" stroke-width="1.2"/>
<rect x="-11" y="-9" width="22" height="2.5" fill="#b8bcc0"/>
<path d="M-8 -4H-5M-8 -4V-1H-5 M-3 -4L-1 0 M1 1H7" stroke="#e8e8e8" stroke-width="1.1" fill="none"/></g>
<rect x="692.0" y="38" width="40" height="2" fill="#9ea9b0"/>
<g transform="translate(762,20)"><rect x="-11" y="-8" width="22" height="17" fill="#80c4f0"/>
<circle cx="-5" cy="-1" r="3.5" fill="#3a8ad8"/><path d="M-5 -1V-4.5A3.5 3.5 0 0 1 -1.5 -1Z" fill="#f0d050"/>
<rect x="1" y="-4" width="7" height="2" fill="#3a70c8"/><rect x="1" y="0" width="7" height="2" fill="#3a70c8"/><rect x="1" y="4" width="7" height="2" fill="#3a70c8"/>
<rect x="-11" y="7" width="22" height="2" fill="#e0f0fc"/></g>
<rect x="742.0" y="38" width="40" height="2" fill="#9ea9b0"/>
<g transform="translate(811,20)"><rect x="-5.3" y="-10.3" width="15.6" height="14.6" rx="2" fill="none" stroke="#2ba0d8" stroke-width="3.4"/>
<rect x="-10.3" y="-4.3" width="15.6" height="14.6" rx="2" fill="none" stroke="#f09a28" stroke-width="3.4"/>
<path d="M-5.3 -4.3V-1" stroke="#2ba0d8" stroke-width="3.4"/></g>
<rect x="791.0" y="38" width="40" height="2" fill="#9ea9b0"/>
<g transform="translate(860,20)"><ellipse cx="-3" cy="-3" rx="9" ry="7.5" fill="#30c838"/>
<path d="M-9 2L-10 6L-5 3Z" fill="#30c838"/>
<ellipse cx="5" cy="4" rx="7" ry="6" fill="#f0f0f0"/>
<circle cx="-6" cy="-4" r="1.2" fill="#1a7a20"/><circle cx="0" cy="-4" r="1.2" fill="#1a7a20"/>
<circle cx="3" cy="3" r="1" fill="#a0a0a0"/><circle cx="7" cy="3" r="1" fill="#a0a0a0"/></g>
<rect x="840.0" y="38" width="40" height="2" fill="#9ea9b0"/>
<g transform="translate(909,20)"><circle cx="2" cy="-3" r="7" fill="none" stroke="#f07818" stroke-width="3.2"/>
<path d="M-3 3L-10 10" stroke="#f07818" stroke-width="3.6" stroke-linecap="round"/></g>
<rect x="889.0" y="38" width="40" height="2" fill="#9ea9b0"/>
<g transform="translate(958,20)"><rect x="-11" y="-11" width="18" height="19" fill="#2c3a60" stroke="#4a6ab8"/>
<rect x="-11" y="-11" width="18" height="3" fill="#5a82d0"/>
<path d="M-4 -4H3Q6 -4 6 -1V3H-1Q-4 3 -4 6V9H-6Q-8 9 -8 6V1Q-8 -2 -5 -2H-1V-4Z" fill="#4a80c8"/>
<path d="M9 12H2Q-1 12 -1 9V5H6Q9 5 9 2V-1H11Q13 -1 13 2V7Q13 10 10 10H6V12Z" fill="#f0d040"/></g>
<rect x="938.0" y="38" width="40" height="2" fill="#9ea9b0"/>
<g transform="translate(1007,20)"><rect x="-12" y="-12" width="24" height="24" fill="#3d3c38"/>
<path d="M-7 -5L7 -10V-5L-7 0Z" fill="#f4a824"/>
<path d="M-7 -5L7 0V5L-7 0Z" fill="#c9841a"/>
<path d="M-7 5L7 0V5L-7 10Z" fill="#f4a824"/></g>
<rect x="987.0" y="38" width="40" height="2" fill="#9ea9b0"/>
<g transform="translate(1056,20)"><rect x="-12" y="-12" width="24" height="24" rx="4" fill="#e31a22"/>
<text x="0" y="4" font-size="10" font-family="Liberation Sans" font-weight="bold" fill="#ffffff" text-anchor="middle">有道</text></g>
<rect x="1036.0" y="38" width="40" height="2" fill="#9ea9b0"/>
<g transform="translate(1105,20)"><path d="M-10 2C-10 -6 -3 -10 2 -9C-2 -6 -3 -2 -2 2C0 -3 5 -8 11 -6C12 2 8 10 0 11C-6 11 -10 7 -10 2Z" fill="#6ad024"/>
<path d="M-8 0C-6 -5 -2 -7 1 -8" stroke="#c8f8a0" stroke-width="1.5" fill="none"/></g>
<rect x="1085.0" y="38" width="40" height="2" fill="#9ea9b0"/>
<g transform="translate(1154,20)"><path d="M-2 -12H2V-9H6V-6H2V-3H-2V-6H-6V-9H-2Z" fill="#38c040"/>
<rect x="-6" y="-2" width="12" height="3" fill="#d83030"/>
<circle cx="0" cy="8" r="4.5" fill="none" stroke="#606468" stroke-width="2.5"/></g>
<rect x="1134.0" y="38" width="40" height="2" fill="#9ea9b0"/>
<g transform="translate(1203,20)"><rect x="-11" y="-11" width="20" height="17" fill="#3a424c" stroke="#505a66"/>
<rect x="-11" y="-11" width="20" height="2.5" fill="#5a6a80"/>
<path d="M-9 -5H-1M-9 -2H-3M-9 1H-2" stroke="#8a9a60" stroke-width="1"/>
<path d="M-2 -3H5Q8 -3 8 0V4H1Q-2 4 -2 7V10H-4Q-6 10 -6 7V2Q-6 -1 -3 -1H1V-3Z" fill="#4a80c8"/>
<path d="M11 13H4Q1 13 1 10V6H8Q11 6 11 3V0H13Q15 0 15 3V8Q15 11 12 11H8V13Z" fill="#f0d040"/></g>
<rect x="1183.0" y="38" width="40" height="2" fill="#9ea9b0"/>
<g transform="translate(1252,20)"><rect x="-12" y="-12" width="24" height="24" rx="3" fill="#f4f8f8"/>
<rect x="-11" y="-11" width="10" height="10" fill="#3a9a80"/><rect x="1" y="-11" width="10" height="10" fill="#2a7a9a"/>
<rect x="1" y="1" width="10" height="10" fill="#3a9a80"/>
<path d="M-10 2L-6 5L-8 9" stroke="#7aa" stroke-width="0.8" fill="none"/></g>
<rect x="1232.0" y="38" width="40" height="2" fill="#9ea9b0"/>
<g transform="translate(1301,20)"><rect x="-11" y="-8" width="22" height="16" fill="#e8ecf0"/>
<rect x="-4" y="-6" width="8" height="12" fill="#1f80e0"/>
<path d="M-9 -4H-6M-9 -1H-6M-9 2H-6 M6 -4H9M6 -1H9M6 2H9" stroke="#7a8a9a" stroke-width="1"/></g>
<rect x="1277.0" y="38" width="48" height="2" fill="#9ea9b0"/>
<g transform="translate(1348,20)"><path d="M-11 2C-12 -5 -4 -10 3 -9C9 -8 11 -3 8 0C5 2 8 6 4 8C-2 11 -10 8 -11 2Z" fill="#dfe6ee"/>
<circle cx="-6" cy="0" r="2" fill="#e03030"/><circle cx="-3" cy="-5" r="2" fill="#40a040"/><circle cx="2" cy="-5" r="2" fill="#3080e0"/><circle cx="0" cy="2" r="1.6" fill="#203040"/>
<path d="M3 10L12 -10" stroke="#e09a50" stroke-width="2.4"/></g>
<rect x="1328.0" y="38" width="40" height="2" fill="#9ea9b0"/>
<g transform="translate(1399,20)"><circle r="11" fill="#f2e01c"/>
<path d="M-1 -8V4A4 4 0 1 1 -4 0.5V-8Z M-1 -8C3 -7 6 -5 6 -1C4 -4 2 -4 -1 -4Z" fill="#22b84a"/></g>
<rect x="1379.0" y="38" width="40" height="2" fill="#9ea9b0"/>
<g transform="translate(1448,20)"><rect x="-12" y="-12" width="24" height="24" rx="5" fill="#f8f8fc"/>
<circle cx="0" cy="-3" r="4.5" fill="none" stroke="#e04870" stroke-width="2.6"/>
<circle cx="-5" cy="3" r="4.5" fill="none" stroke="#3aa0e8" stroke-width="2.6"/>
<circle cx="5" cy="3" r="4.5" fill="none" stroke="#3aa0e8" stroke-width="2.6"/>
<rect x="-4" y="10" width="8" height="1.6" fill="#e04870"/></g>
<rect x="1428.0" y="38" width="40" height="2" fill="#9ea9b0"/>
<g transform="translate(1497,20)"><rect x="-11" y="-12" width="22" height="18" fill="#2a2e32" stroke="#b8bcc0" stroke-width="1.2"/>
<path d="M-8 -8L-5 -6L-8 -4" stroke="#e8e8e8" stroke-width="1" fill="none"/>
<g transform="translate(3,4) rotate(45)"><rect x="-7" y="-3" width="5" height="5" fill="#e83040"/><rect x="-2" y="-3" width="5" height="5" fill="#f0c020"/><rect x="-2" y="2" width="5" height="5" fill="#50c040"/><rect x="3" y="-3" width="5" height="5" fill="#3070e0"/></g></g>
<rect x="1477.0" y="38" width="40" height="2" fill="#9ea9b0"/>
<g transform="translate(1546,20)"><path d="M-3 -11L8 -12L11 -8V8L0 11L-11 9V-2L-3 -3Z" fill="#d0d2d4"/>
<path d="M-3 -11L8 -12L11 -8L0 -7Z" fill="#f0f2f4"/>
<rect x="-1" y="-6" width="6" height="7" fill="#0c1a10"/><path d="M0 -4H3" stroke="#40ff60" stroke-width="0.8"/>
<rect x="-9" y="1" width="3" height="6" fill="#707478"/><rect x="-4" y="2" width="3" height="6" fill="#707478"/></g>
<rect x="1526.0" y="38" width="40" height="2" fill="#9ea9b0"/>
<g transform="translate(1595,20)"><rect x="-12" y="-12" width="24" height="24" rx="3" fill="#5ab8e8" stroke="#c8ecff" stroke-width="1"/>
<ellipse cx="-1" cy="3" rx="7" ry="8" fill="#e8f4ff"/>
<ellipse cx="3" cy="-6" rx="5" ry="3" fill="#b8e0f8"/>
<path d="M-10 -9H-4" stroke="#ffffff" stroke-width="1.5"/></g>
<rect x="1575.0" y="38" width="40" height="2" fill="#9ea9b0"/>
</svg>
</div>

</body></html>
